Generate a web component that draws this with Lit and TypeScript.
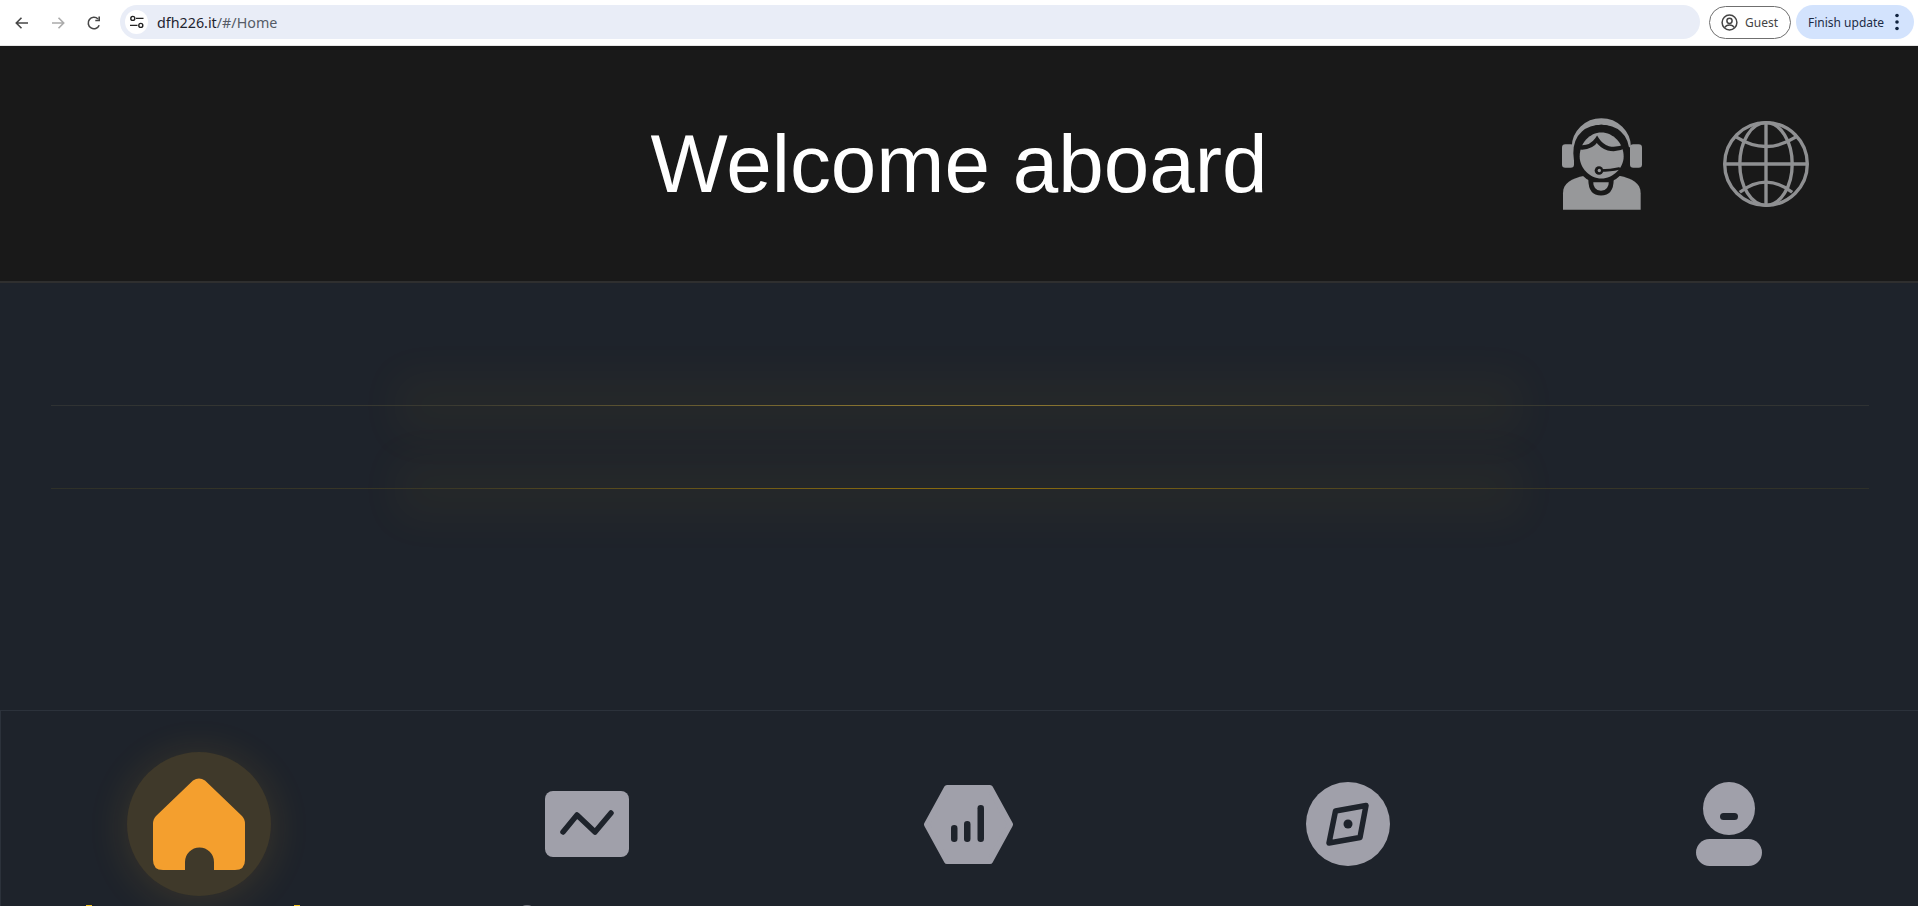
import { LitElement, html, css, svg } from "lit";
import { customElement } from "lit/decorators.js";

const GREY = "#a0a0aa";
const DARK = "#1e232b";

@customElement("app-root")
export class AppRoot extends LitElement {
  static styles = css`
    :host {
      display: flex;
      flex-direction: column;
      height: 906px;
      overflow: hidden;
      background: #1e232b;
      font-family: "Liberation Sans", Arial, sans-serif;
    }
    svg { display: block; flex: none; }

    .chrome {
      height: 45px;
      flex: none;
      background: #fff;
      border-bottom: 1px solid #e6e6e6;
      display: flex;
      align-items: center;
      padding-left: 13px;
      padding-right: 4px;
      font-family: "Noto Sans", sans-serif;
    }
    .nav-buttons { display: flex; gap: 18px; width: 107px; flex: none; }
    .omnibox {
      flex: 1;
      height: 34px;
      border-radius: 17px;
      background: #e9edf7;
      display: flex;
      align-items: center;
      padding-left: 5px;
      gap: 9px;
      font-size: 14.3px;
      color: #555b66;
      margin-top: -1px;
    }
    .chip {
      width: 23px; height: 24px; border-radius: 50%; background: #fff;
      display: flex; align-items: center; justify-content: center;
    }
    .host-name { color: #1f2430; }
    .guest {
      box-sizing: border-box;
      margin-left: 9px;
      width: 82px; height: 33px;
      border: 1px solid #6f6f6f;
      border-radius: 17px;
      display: flex; align-items: center;
      padding-left: 11px; gap: 7px;
      font-size: 12px; color: #444;
      margin-top: -1px;
    }
    .update {
      box-sizing: border-box;
      margin-left: 5px;
      width: 118px; height: 34px;
      background: #d3e3fd;
      border-radius: 17px;
      display: flex; align-items: center;
      padding-left: 12px; gap: 10px;
      font-size: 12px; color: #1c2b45;
      margin-top: -1px;
      white-space: nowrap;
    }

    .header {
      height: 235px;
      flex: none;
      background: #191919;
      border-bottom: 2px solid #2f2f2f;
      display: grid;
      grid-template-columns: 1fr auto 1fr;
      align-items: center;
    }
    .title {
      grid-column: 2;
      margin: 0;
      font-size: 81.8px;
      font-weight: 400;
      color: #fff;
      line-height: 1;
    }
    .tools {
      grid-column: 3;
      display: flex;
      align-items: center;
      padding-left: 295px;
      gap: 81px;
    }

    .content {
      flex: 1;
      display: flex;
      flex-direction: column;
      gap: 82px;
      padding: 122px 49px 0 51px;
      background: #1e232b;
    }
    .line { height: 1px; position: relative; }
    .line::before {
      content: "";
      position: absolute;
      top: 0; height: 1px;
      left: 375px; right: 377px;
      box-shadow: 0 0 44px 34px rgba(245, 180, 40, 0.03);
    }
    .line::after {
      content: "";
      position: absolute;
      inset: 0;
    }
    .line.a::after {
      background: linear-gradient(90deg, #2f3233 0%, #3a3a31 22%, #8a7530 46%, #8a7530 54%, #3a3a31 78%, #2f3233 100%);
    }
    .line.b::after {
      background: linear-gradient(90deg, #2e3029 0%, #3b3826 22%, #87690f 46%, #87690f 54%, #3b3826 78%, #2e3029 100%);
    }

    .tabbar {
      height: 196px;
      flex: none;
      box-sizing: border-box;
      border-top: 1px solid #2c323b;
      border-left: 1px solid #2c323b;
      display: flex;
      padding-left: 148px;
      padding-top: 41px;
      background: #1e232b;
    }
    .tab {
      width: 100px;
      flex: none;
      display: flex;
      flex-direction: column;
      align-items: center;
    }
    .slot {
      height: 144px;
      flex: none;
      display: flex;
      align-items: center;
      justify-content: center;
    }
    .halo {
      width: 144px; height: 144px;
      flex: none;
      border-radius: 50%;
      background: rgba(245, 180, 40, 0.155);
      box-shadow: 0 4px 42px rgba(245, 180, 40, 0.14);
      display: flex; align-items: center; justify-content: center;
    }
    .gap-2 { margin-left: 288px; }
    .gap-3 { margin-left: 281px; }
    .gap-4 { margin-left: 280px; }
    .gap-5 { margin-left: 281px; }

    .clipped {
      margin-top: 9px;
      height: 6px;
      flex: none;
      display: flex;
    }
    .clipped.home { width: 226px; gap: 202px; }
    .clipped.chart { width: 134px; }
    .clipped i { display: block; height: 6px; width: 6px; background: #f3c21f; }
    .clipped.chart i { width: 14px; background: #70727a; border-radius: 6px 6px 0 0; }
  `;

  private back() {
    return svg`<svg width="18" height="18" viewBox="0 0 18 18" fill="none" stroke="#474747" stroke-width="1.6"><path d="M15 9H3.5M8.5 3.8 3.3 9l5.2 5.2"/></svg>`;
  }
  private forward() {
    return svg`<svg width="18" height="18" viewBox="0 0 18 18" fill="none" stroke="#ababab" stroke-width="1.6"><path d="M3 9h11.5M9.5 3.8 14.7 9l-5.2 5.2"/></svg>`;
  }
  private reload() {
    return svg`<svg width="18" height="18" viewBox="0 0 18 18" fill="none" stroke="#474747" stroke-width="1.6"><path d="M14.2 11.2A5.7 5.7 0 1 1 13 5"/><path d="M14.2 2.6v3.9h-3.9" /></svg>`;
  }
  private tune() {
    return svg`<svg width="16" height="16" viewBox="0 0 16 16" fill="none" stroke="#222" stroke-width="1.4"><circle cx="3.8" cy="4.4" r="2"/><path d="M7 4.4h7.5M1 11.4h7.5"/><circle cx="11.8" cy="11.4" r="2"/></svg>`;
  }
  private guest() {
    return svg`<svg width="17" height="17" viewBox="0 0 17 17" fill="none" stroke="#444" stroke-width="1.5"><circle cx="8.5" cy="8.5" r="7.4"/><circle cx="8.5" cy="6.8" r="2.6"/><path d="M3.8 13.5c1-2 2.8-2.6 4.7-2.6s3.7.6 4.7 2.6"/></svg>`;
  }
  private dots() {
    return svg`<svg width="6" height="18" viewBox="0 0 6 18" fill="#10233f"><circle cx="3" cy="2.5" r="1.8"/><circle cx="3" cy="9" r="1.8"/><circle cx="3" cy="15.5" r="1.8"/></svg>`;
  }
  private headset() {
    const c = "#97989a";
    const d = "#191919";
    return svg`<svg width="80" height="92" viewBox="97 55 240 275">
      <path fill="${c}" d="M100 330V280C100 250 125 236 165 228H268C308 236 333 250 333 280V330Z"/>
      <path fill="none" stroke="${c}" stroke-width="20" d="M136 142A79 77 0 0 1 294 142"/>
      <rect x="97" y="133" width="36" height="71" rx="10" fill="${c}"/>
      <rect x="301" y="133" width="36" height="71" rx="10" fill="${c}"/>
      <path fill="${d}" stroke="${d}" stroke-width="14" d="M138 160C138 105 175 82 215 82S292 105 292 160C292 210 255 243 215 243S138 210 138 160Z"/>
      <path fill="${c}" stroke="${d}" stroke-width="14" d="M183 240C183 270 197 280 214 280S245 270 245 240Z"/>
      <path fill="${c}" d="M150 170C150 130 180 98 215 98S282 130 282 170C282 205 250 236 215 236S150 205 150 170Z"/>
      <path fill="none" stroke="${d}" stroke-width="13" d="M146 142C172 146 190 136 202 119C218 144 248 158 288 138"/>
      <path fill="none" stroke="${d}" stroke-width="7" stroke-linecap="round" d="M210 212C230 212 248 211 268 206"/>
      <circle cx="208" cy="212" r="13" fill="${d}"/>
      <circle cx="209" cy="212" r="5" fill="${c}"/>
    </svg>`;
  }
  private globe() {
    return svg`<svg width="86" height="86" viewBox="580 64 256 256" fill="none" stroke="#8f9092" stroke-width="10">
      <circle cx="708" cy="192" r="123"/>
      <ellipse cx="708" cy="192" rx="78" ry="123"/>
      <path d="M708 69V315M585 192H831"/>
      <path d="M620 112Q708 168 796 112M630 276Q708 216 786 276"/>
    </svg>`;
  }
  private home() {
    return svg`<svg width="92" height="92" viewBox="0 0 92 92" fill="#f49f2e"><path d="M40 2.5Q46-1.5 52 2.5L89 38Q92 41 92 46V82Q92 92 82 92H61V84A14.5 14.5 0 0 0 32 84V92H10Q0 92 0 82V46Q0 41 3 38Z"/></svg>`;
  }
  private chart() {
    return svg`<svg width="84" height="66" viewBox="0 0 84 66"><rect width="84" height="66" rx="8" fill="${GREY}"/><path d="M18 41 32 24 50 41 66 22" fill="none" stroke="${DARK}" stroke-width="5.5" stroke-linecap="round" stroke-linejoin="round"/></svg>`;
  }
  private hex() {
    return svg`<svg width="89" height="79" viewBox="0 0 89 79"><path d="M3 39.5 23 3H66L86 39.5 66 76H23Z" fill="${GREY}" stroke="${GREY}" stroke-width="6" stroke-linejoin="round"/><g fill="${DARK}"><rect x="27" y="40" width="6.5" height="17" rx="3.2"/><rect x="40" y="36" width="6.5" height="21" rx="3.2"/><rect x="53.5" y="20" width="6.5" height="37" rx="3.2"/></g></svg>`;
  }
  private compass() {
    return svg`<svg width="84" height="84" viewBox="0 0 84 84"><circle cx="42" cy="42" r="42" fill="${GREY}"/><path d="M29.5 29 60 23.5 54 55.5 23 61Z" fill="none" stroke="${DARK}" stroke-width="5.5" stroke-linejoin="round"/><circle cx="42" cy="42" r="4.5" fill="${DARK}"/></svg>`;
  }
  private user() {
    return svg`<svg width="66" height="84" viewBox="0 0 66 84"><ellipse cx="33" cy="26.5" rx="26" ry="26.5" fill="${GREY}"/><rect x="24" y="31" width="18" height="7" rx="3.5" fill="${DARK}"/><rect y="57" width="66" height="27" rx="13.5" fill="${GREY}"/></svg>`;
  }

  render() {
    return html`
      <div class="chrome">
        <div class="nav-buttons">${this.back()}${this.forward()}${this.reload()}</div>
        <div class="omnibox">
          <span class="chip">${this.tune()}</span>
          <span><span class="host-name">dfh226.it</span>/#/Home</span>
        </div>
        <div class="guest">${this.guest()}<span>Guest</span></div>
        <div class="update"><span>Finish update</span>${this.dots()}</div>
      </div>
      <header class="header">
        <h1 class="title">Welcome aboard</h1>
        <div class="tools">${this.headset()}${this.globe()}</div>
      </header>
      <main class="content">
        <div class="line a"></div>
        <div class="line b"></div>
      </main>
      <nav class="tabbar">
        <div class="tab">
          <div class="slot"><div class="halo">${this.home()}</div></div>
          <div class="clipped home" aria-hidden="true"><i></i><i></i></div>
        </div>
        <div class="tab gap-2">
          <div class="slot">${this.chart()}</div>
          <div class="clipped chart" aria-hidden="true"><i></i></div>
        </div>
        <div class="tab gap-3"><div class="slot">${this.hex()}</div></div>
        <div class="tab gap-4"><div class="slot">${this.compass()}</div></div>
        <div class="tab gap-5"><div class="slot">${this.user()}</div></div>
      </nav>
    `;
  }
}
